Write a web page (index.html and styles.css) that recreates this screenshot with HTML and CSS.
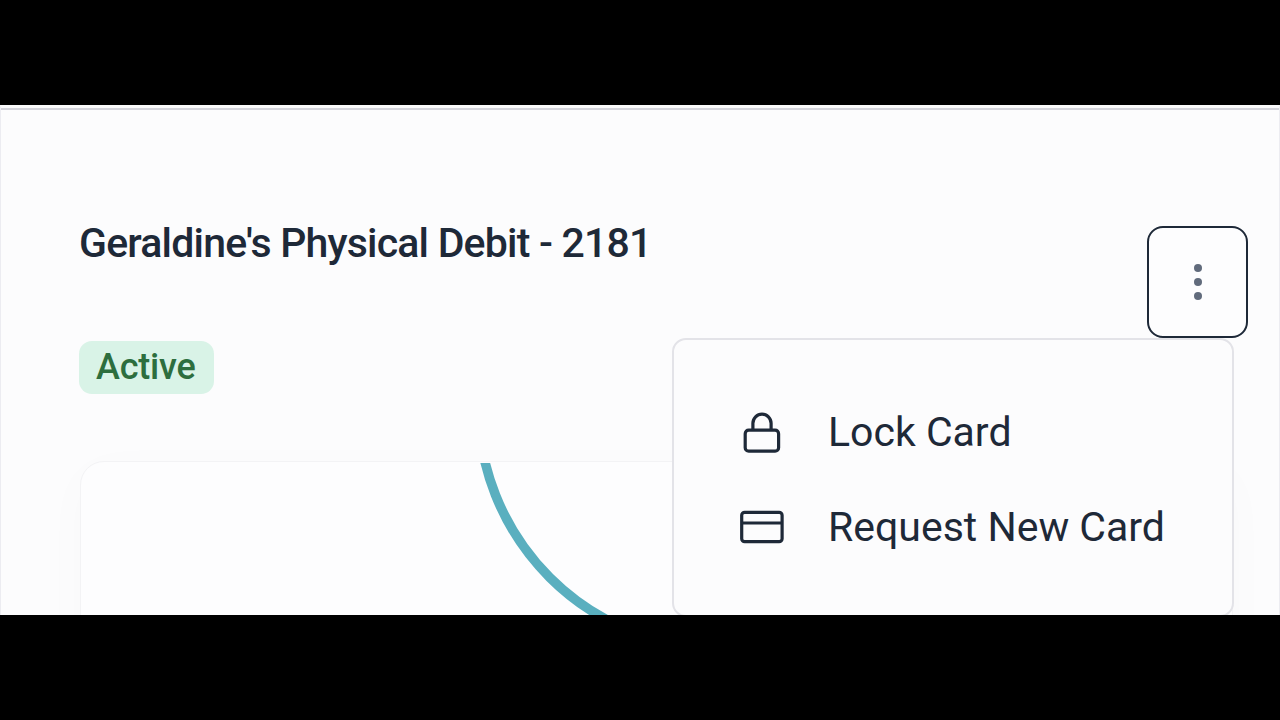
FILE: index.html
```
<!DOCTYPE html>
<html lang="en">
<head>
    <meta charset="UTF-8">
    <meta name="viewport" content="width=device-width, initial-scale=1.0">
    <title>Geraldine's Physical Debit - 2181</title>
    <link rel="stylesheet" href="styles.css">
</head>
<body>
    <main class="panel">
        <header class="panel-header">
            <div class="card-info">
                <h1>Geraldine's Physical Debit - 2181</h1>
                <span class="badge">Active</span>
            </div>
            <div class="actions">
                <button class="menu-button" type="button" aria-label="Card options">
                    <span class="dot"></span>
                    <span class="dot"></span>
                    <span class="dot"></span>
                </button>
                <ul class="menu">
                    <li class="menu-item">
                        <svg class="icon" width="48" height="48" viewBox="0 0 48 48">
                            <rect x="7.2" y="22.2" width="33.4" height="21" rx="3.5"/>
                            <path d="M14.9 22.2V15.2a9.1 9.1 0 0 1 18.2 0v7"/>
                        </svg>
                        <span>Lock Card</span>
                    </li>
                    <li class="menu-item">
                        <svg class="icon" width="48" height="48" viewBox="0 0 48 48">
                            <rect x="3.7" y="9.3" width="40.4" height="29.4" rx="3"/>
                            <path d="M3.7 20H44.1"/>
                        </svg>
                        <span>Request New Card</span>
                    </li>
                </ul>
            </div>
        </header>

        <section class="debit-card">
            <svg class="ring" width="640" height="153" viewBox="0 0 640 153">
                <circle cx="640.8" cy="-57.9" r="243.5"/>
            </svg>
        </section>
    </main>
</body>
</html>
```
FILE: styles.css
```
* {
    box-sizing: border-box;
}

body {
    margin: 0;
    height: 720px;
    padding: 105px 0;
    background-color: #000;
    color: #1e2938;
    font-family: Roboto, "Liberation Sans", sans-serif;
    overflow: hidden;
}

.panel {
    height: 510px;
    padding: 0 32px 0 79px;
    background-color: #fcfcfd;
    border: 1px solid #ececf1;
    border-top: 3px solid #fafafb;
    border-bottom: none;
    box-shadow: inset 0 2px 0 #d3d3da;
    overflow: hidden;
}

.panel-header {
    display: flex;
    justify-content: space-between;
    height: 353px;
    padding-top: 118px;
}

.card-info {
    display: flex;
    flex-direction: column;
    align-items: flex-start;
}

h1 {
    margin: -7px 0 0 -1px;
    font-size: 41px;
    line-height: 48px;
    font-weight: 500;
    letter-spacing: -0.8px;
    white-space: nowrap;
}

.badge {
    margin: 74px 0 0 -1px;
    padding: 0 18px 0 17px;
    height: 53px;
    line-height: 53px;
    border-radius: 13px;
    background-color: #d9f3e7;
    color: #2d6e3e;
    font-size: 36px;
    font-weight: 500;
    letter-spacing: -0.2px;
}

.actions {
    position: relative;
}

.menu-button {
    display: flex;
    flex-direction: column;
    align-items: center;
    justify-content: center;
    gap: 6px;
    width: 101px;
    height: 112px;
    margin-right: -1px;
    padding: 0;
    background-color: #fdfdfe;
    border: 2px solid #1e2938;
    border-radius: 16px;
}

.dot {
    width: 8px;
    height: 8px;
    border-radius: 50%;
    background-color: #616b7c;
}

.menu {
    position: absolute;
    top: 112px;
    right: 13px;
    z-index: 2;
    display: flex;
    flex-direction: column;
    gap: 47px;
    width: 562px;
    height: 279px;
    margin: 0;
    padding: 68px 64px;
    list-style: none;
    background-color: #fcfcfd;
    border: 2px solid #e3e3e8;
    border-radius: 14px;
}

.menu-item {
    display: flex;
    align-items: center;
    gap: 42px;
    height: 48px;
    font-size: 41px;
    line-height: 48px;
    white-space: nowrap;
}

.icon {
    fill: none;
    stroke: #1e2938;
    stroke-width: 3.2;
    stroke-linejoin: round;
}

.debit-card {
    height: 240px;
    margin-right: 14px;
    border: 1px solid #f3f3f5;
    border-radius: 24px;
    background-color: #fdfdfe;
    box-shadow: 0 10px 50px rgba(0, 0, 0, 0.02);
}

.ring {
    display: block;
    margin-top: 1px;
}

.ring circle {
    fill: none;
    stroke: #5aafbf;
    stroke-width: 9.5;
}
```
